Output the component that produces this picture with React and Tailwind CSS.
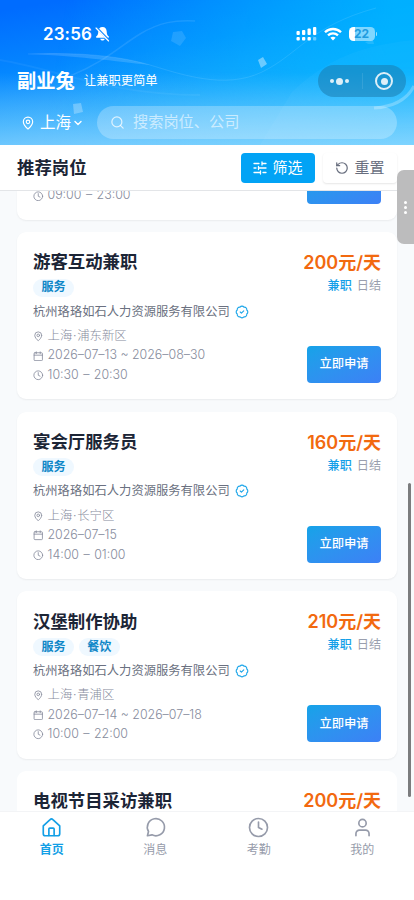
import {
  BadgeCheck,
  ChevronDown,
  Clock,
  MapPin,
  RotateCcw,
  Search,
} from "lucide-react";

const jobs = [
  {
    id: 1,
    title: "游客互动兼职",
    pay: "200元/天",
    tags: ["服务"],
    company: "杭州珞珞如石人力资源服务有限公司",
    place: "上海·浦东新区",
    date: "2026–07–13 ~ 2026–08–30",
    time: "10:30 – 20:30",
  },
  {
    id: 2,
    title: "宴会厅服务员",
    pay: "160元/天",
    tags: ["服务"],
    company: "杭州珞珞如石人力资源服务有限公司",
    place: "上海·长宁区",
    date: "2026–07–15",
    time: "14:00 – 01:00",
  },
  {
    id: 3,
    title: "汉堡制作协助",
    pay: "210元/天",
    tags: ["服务", "餐饮"],
    company: "杭州珞珞如石人力资源服务有限公司",
    place: "上海·青浦区",
    date: "2026–07–14 ~ 2026–07–18",
    time: "10:00 – 22:00",
  },
];

function HeaderArt() {
  return (
    <svg
      className="absolute inset-0"
      width="414"
      height="145"
      viewBox="0 0 414 145"
      fill="none"
    >
      <path
        d="M70 76 C105 62 120 46 140 34 S175 20 195 21"
        stroke="#fff"
        strokeOpacity=".1"
        strokeWidth="1.5"
      />
      <path
        d="M28 54 C80 52 120 56 150 65 S225 90 262 72 S310 26 376 8"
        stroke="#fff"
        strokeOpacity=".1"
      />
      <path
        d="M28 54 C80 52 120 56 150 65 C130 63 80 56 28 54Z"
        fill="#fff"
        fillOpacity=".15"
      />
      <path
        d="M0 60 C60 70 110 95 200 95"
        stroke="#fff"
        strokeOpacity=".05"
        strokeWidth="2"
      />
      <path
        d="M292 92 C320 66 350 46 414 40 V145 H260Z"
        fill="#fff"
        fillOpacity=".03"
      />
      <path
        d="M374 108 Q404 106 414 86"
        stroke="#fff"
        strokeOpacity=".25"
        strokeWidth="3"
      />
      <path d="m173 32 9-1 4 7-6 8-9-5Z" fill="#fff" fillOpacity=".12" />
      <path d="m258 60 5-3 4 7-6 4Z" fill="#fff" fillOpacity=".4" />
      <path d="m73 104 8-1 2 9-9 2Z" fill="#fff" fillOpacity=".28" />
      <path d="m365 42 8-2 1 4-6 0Z" fill="#fff" fillOpacity=".12" />
    </svg>
  );
}

function StatusBar() {
  return (
    <div className="flex h-[20px] items-center pl-[43px] pr-[37px] text-white">
      <span className="text-[17px] leading-5 font-semibold tracking-[0.1px]">
        23:56
      </span>
      <svg className="ml-[3px]" width="15" height="16" viewBox="0 0 15 16">
        <path
          d="M7.5 1C4.8 1 3.4 3 3.3 5.4C3.2 8.4 2.5 9.5 1.2 10.6C.8 11 1 11.8 1.7 11.8H13.3C14 11.8 14.2 11 13.8 10.6C12.5 9.5 11.8 8.4 11.7 5.4C11.6 3 10.2 1 7.5 1Z"
          fill="#fff"
        />
        <path d="M5.2 12.8H9.8C9.4 15.2 5.6 15.2 5.2 12.8Z" fill="#fff" />
        <path d="M1.5 1.5 14 14.5" stroke="#168bff" strokeWidth="2.2" />
        <path
          d="M1 2 13.6 15"
          stroke="#fff"
          strokeWidth="1.1"
          strokeLinecap="round"
        />
      </svg>
      <svg className="ml-auto" width="21" height="16" viewBox="0 0 21 16">
        <g fill="#fff">
          <rect x=".5" y="5" width="3.3" height="4" rx="1" />
          <rect x="6" y="4" width="3.3" height="5" rx="1" />
          <rect x="11.5" y="2.5" width="3.3" height="6.5" rx="1" />
          <rect x="17" y="1" width="3.3" height="8" rx="1" />
          <rect x=".5" y="11" width="3.3" height="3.6" rx="1" />
          <rect x="6" y="11" width="3.3" height="3.6" rx="1" />
          <rect x="11.5" y="11" width="3.3" height="3.6" rx="1" />
          <rect
            x="17"
            y="11"
            width="3.3"
            height="3.6"
            rx="1"
            fillOpacity=".4"
          />
        </g>
      </svg>
      <svg className="ml-[7px]" width="18" height="14" viewBox="0 0 18 14">
        <g stroke="#fff" strokeWidth="2.3" fill="none">
          <path d="M1 5.2C5.3.9 12.7.9 17 5.2" />
          <path d="M4 8.4C6.8 5.7 11.2 5.7 14 8.4" />
        </g>
        <path d="M6.4 10.8C7.8 9.5 10.2 9.5 11.6 10.8L9 13.4Z" fill="#fff" />
      </svg>
      <div className="ml-[7px] flex h-[14px] w-[26px] items-center justify-center rounded-[4.5px] bg-gradient-to-r from-white from-22% to-white/50 to-22% text-[12px] leading-none font-bold text-[#1f9cdf]">
        22
      </div>
      <div className="ml-px h-[4px] w-[1.5px] rounded-r bg-white/60" />
    </div>
  );
}

function Header() {
  return (
    <header className="relative h-[144.5px] shrink-0 overflow-hidden bg-[linear-gradient(170deg,#006cff_5%,#0588ff_35%,#1fa3fd_58%,#55bdfd_80%,#7bceff_98%)]">
      <div className="absolute inset-0 bg-[linear-gradient(100deg,#00b4ff00_15%,#00b4ffe6_90%)] [mask-image:linear-gradient(#000_45%,#0006)]" />
      <div className="absolute inset-0 bg-[linear-gradient(#a5e0ff00_50%,#a5e0ff80)]" />
      <HeaderArt />
      <div className="relative pt-[24px]">
        <StatusBar />

        {/* brand row with the mini program capsule */}
        <div className="mt-[21px] flex h-8 items-center pr-2 pl-[17px] text-white">
          <h1 className="text-[19.3px] leading-8 font-bold">副业兔</h1>
          <span className="ml-[9px] text-[12.3px]">让兼职更简单</span>
          <div className="ml-auto flex h-8 w-[88px] items-center rounded-full bg-[#1b7cae]/55">
            <div className="flex flex-1 items-center justify-center gap-[2px]">
              <i className="size-1 rounded-full bg-white/85" />
              <i className="size-[7px] rounded-full bg-white/85" />
              <i className="size-1 rounded-full bg-white/85" />
            </div>
            <div className="h-4 w-px bg-white/10" />
            <div className="flex flex-1 items-center justify-center">
              <div className="flex size-[18px] items-center justify-center rounded-full border-2 border-white/85">
                <i className="size-[7px] rounded-full bg-white/85" />
              </div>
            </div>
          </div>
        </div>

        {/* city + search */}
        <div className="mt-[9px] flex h-[33px] items-center pr-[17px] pl-[21px] text-white">
          <MapPin size={14} strokeWidth={2} />
          <span className="ml-[5px] text-[15.5px]">上海</span>
          <ChevronDown size={12} strokeWidth={2.8} className="ml-px" />
          <div className="ml-auto flex h-[33px] w-[300px] items-center rounded-full bg-white/25 pl-[13px]">
            <Search size={15} strokeWidth={2} className="text-white/75" />
            <span className="ml-2 text-[15.2px] text-white/60">
              搜索岗位、公司
            </span>
          </div>
        </div>
      </div>
    </header>
  );
}

function CalendarIcon({ size, strokeWidth }) {
  return (
    <svg
      width={size}
      height={size}
      viewBox="0 0 24 24"
      fill="none"
      stroke="currentColor"
      strokeWidth={strokeWidth}
      strokeLinecap="round"
      strokeLinejoin="round"
    >
      <rect x="2.5" y="4" width="19" height="18" rx="2" />
      <path d="M2.5 9.5h19M7.5 2v4M16.5 2v4" />
    </svg>
  );
}

function ApplyButton() {
  return (
    <button className="h-[37px] w-[74px] shrink-0 rounded-[4px] bg-gradient-to-br from-[#14a3e8] to-[#3c80f6] text-[12.3px] font-medium text-white">
      立即申请
    </button>
  );
}

function InfoRow({ icon: Icon, children }) {
  return (
    <div className="flex h-[19.5px] items-center gap-[4px] text-[12.4px] font-light whitespace-nowrap text-[#868b9c]">
      <Icon size={10.5} strokeWidth={1.9} />
      <span>{children}</span>
    </div>
  );
}

function JobCard({ job }) {
  // the dot between city and district takes a little more room than the font gives it
  const [city, district] = job.place.split("·");

  return (
    <div className="h-[167.2px] shrink-0 rounded-[9px] bg-white px-[16px] pt-[16.5px] shadow-[0_1px_2px_rgba(0,0,0,0.06)]">
      <div className="flex h-7 items-center justify-between">
        <h3 className="text-[17.4px] font-bold text-[#1c2536]">{job.title}</h3>
        <span className="text-[18px] font-semibold text-[#f2690f]">
          {job.pay}
        </span>
      </div>

      <div className="mt-[2px] flex h-[18px] items-center justify-between">
        <div className="flex gap-[4.5px]">
          {job.tags.map((tag) => (
            <span
              key={tag}
              className="flex h-[18px] items-center rounded-full bg-[#eff8ff] px-[8.5px] text-[12.1px] font-bold text-[#0f87c8]"
            >
              {tag}
            </span>
          ))}
        </div>
        <div className="mt-[-3px] flex gap-[5px] text-[12.1px]">
          <span className="font-medium text-[#14a0e8]">兼职</span>
          <span className="text-[#9a9fae]">日结</span>
        </div>
      </div>

      <div className="mt-[5px] flex h-5 items-center gap-[5px]">
        <span className="pt-px text-[12.3px] text-[#6a7080]">
          {job.company}
        </span>
        <BadgeCheck size={14} strokeWidth={1.9} className="text-[#1aa5e9]" />
      </div>

      <div className="mt-[5px] flex items-end justify-between">
        <div>
          <InfoRow icon={MapPin}>
            {city}
            <span className="px-[0.7px]">·</span>
            {district}
          </InfoRow>
          <InfoRow icon={CalendarIcon}>{job.date}</InfoRow>
          <InfoRow icon={Clock}>
            <span className="[word-spacing:1px]">{job.time}</span>
          </InfoRow>
        </div>
        <div className="pb-[2px]">
          <ApplyButton />
        </div>
      </div>
    </div>
  );
}

const tabs = [
  {
    name: "首页",
    active: true,
    icon: (
      <>
        <path d="M2.6 10.2 10.4 3a2.3 2.3 0 0 1 3.2 0L21.4 10.2V19a2.4 2.4 0 0 1-2.4 2.4H5A2.4 2.4 0 0 1 2.6 19Z" />
        <path d="M9 21v-7.3a1 1 0 0 1 1-1h4a1 1 0 0 1 1 1V21" />
      </>
    ),
  },
  {
    name: "消息",
    icon: <path d="M2.8 21.4 4 16.6A9.8 9.8 0 1 1 8 20.4Z" />,
  },
  {
    name: "考勤",
    icon: (
      <>
        <circle cx="12" cy="12" r="10.3" />
        <path d="M12 5.8V12l4 2" />
      </>
    ),
  },
  {
    name: "我的",
    icon: (
      <>
        <circle cx="12" cy="7" r="4.2" />
        <path d="M4.5 21.4V19a4 4 0 0 1 4-4h7a4 4 0 0 1 4 4v2.4" />
      </>
    ),
  },
];

function TabBar() {
  return (
    <nav className="grid h-[89px] shrink-0 grid-cols-4 border-t border-[#f3f4f6] bg-white pt-[5px]">
      {tabs.map((tab) => (
        <div
          key={tab.name}
          className={`flex flex-col items-center ${tab.active ? "font-bold text-[#139fe6]" : "text-[#969baa]"}`}
        >
          <svg
            width="21"
            height="21"
            viewBox="0 0 24 24"
            fill="none"
            stroke="currentColor"
            strokeWidth="1.9"
            strokeLinecap="round"
            strokeLinejoin="round"
          >
            {tab.icon}
          </svg>
          <span className="mt-[2px] text-[12px] leading-[19px]">
            {tab.name}
          </span>
        </div>
      ))}
    </nav>
  );
}

export default function App() {
  return (
    <div className="relative flex h-[900px] w-[414px] flex-col overflow-hidden bg-[#f8fafc] font-['Inter','Noto_Sans_CJK_SC',sans-serif]">
      <Header />

      {/* section title */}
      <div className="z-10 flex h-[46.5px] shrink-0 items-center border-b border-[#e3e5e8] bg-white pr-[17px] pl-[17px]">
        <h2 className="pt-px text-[17.4px] font-bold text-[#1c2536]">
          推荐岗位
        </h2>
        <button className="mt-px ml-auto flex h-[30px] w-[74px] items-center justify-center gap-[5px] rounded-[4px] bg-[#02a3f5] text-[15px] text-white">
          <svg
            width="14"
            height="14"
            viewBox="0 0 14 14"
            fill="none"
            stroke="currentColor"
            strokeWidth="1.3"
            strokeLinecap="round"
          >
            <path d="M1 2.5h5M9 2.5h4M9 1v3M1 7h2M5.5 7H13M5.5 5.5v3M1 11.5h6M10 11.5h3M7.5 10v3" />
          </svg>
          筛选
        </button>
        <button className="mt-px ml-2 flex h-[30px] w-[74px] items-center justify-center gap-[5px] rounded-[4px] bg-white text-[15px] text-[#686e7e] shadow-[0_1px_2px_rgba(0,0,0,0.1)]">
          <RotateCcw size={14} strokeWidth={2.1} />
          重置
        </button>
      </div>

      {/* job list, scrolled so the first card is cut off by the title bar */}
      <main className="min-h-0 flex-1 overflow-hidden px-[17px]">
        <div className="flex flex-col gap-[12.5px]">
          <div className="flex h-[28.5px] shrink-0 items-end justify-between rounded-b-[9px] bg-white px-[16px] pb-[14px] shadow-[0_1px_2px_rgba(0,0,0,0.06)]">
            <InfoRow icon={Clock}>
              <span className="[word-spacing:1px]">09:00 – 23:00</span>
            </InfoRow>
            <div className="pb-[2px]">
              <ApplyButton />
            </div>
          </div>

          {jobs.map((job) => (
            <JobCard key={job.id} job={job} />
          ))}

          <div className="flex h-[60px] shrink-0 justify-between rounded-t-[9px] bg-white px-[16px] pt-4">
            <h3 className="text-[17.4px] leading-7 font-bold text-[#1c2536]">
              电视节目采访兼职
            </h3>
            <span className="text-[18px] leading-7 font-semibold text-[#f2690f]">
              200元/天
            </span>
          </div>
        </div>
      </main>

      <TabBar />

      {/* floating handle */}
      <div className="absolute top-[170px] right-0 z-20 flex h-[74px] w-[17px] flex-col items-center justify-center gap-[2px] rounded-l-[7px] bg-[#bcbcbd]">
        <i className="size-[3px] rounded-full bg-white" />
        <i className="size-[3px] rounded-full bg-white" />
        <i className="size-[3px] rounded-full bg-white" />
      </div>

      {/* scrollbar thumb */}
      <div className="absolute top-[483px] right-[3px] h-[314px] w-[3px] rounded-full bg-[#7b7c7e]" />
    </div>
  );
}
